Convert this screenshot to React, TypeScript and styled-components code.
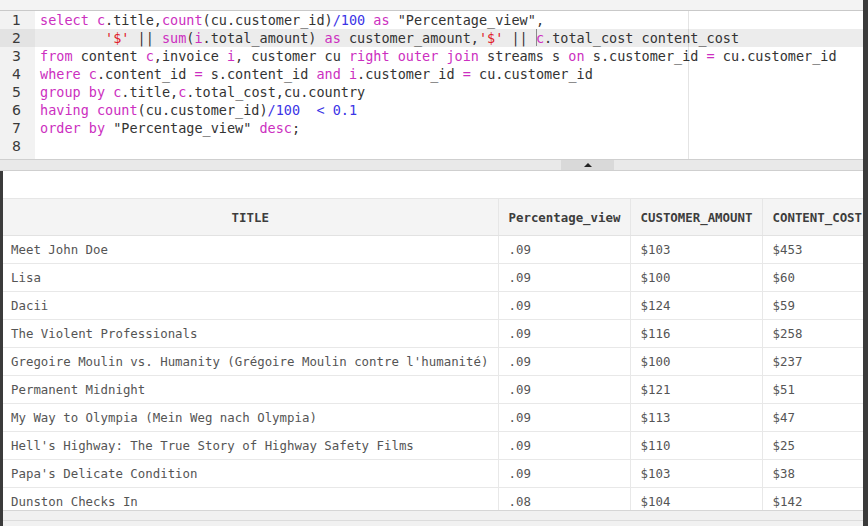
import React from "react";
import styled, { createGlobalStyle } from "styled-components";

const Global = createGlobalStyle`
  html, body { margin: 0; padding: 0; background: #ffffff; }
  body { font-family: "DejaVu Sans Mono", monospace; }
`;

const Frame = styled.div`
  width: 868px;
  height: 526px;
  box-sizing: border-box;
  border-right: 5px solid #3b3b3b;
  display: flex;
  flex-direction: column;
  overflow: hidden;
  background: #fff;
`;

const TopStrip = styled.div`
  height: 10px;
  flex: 0 0 auto;
  background: #f3f3f3;
  border-bottom: 1px solid #c9c9c9;
`;

const Editor = styled.div`
  height: 148px;
  flex: 0 0 auto;
  display: flex;
  font-family: "DejaVu Sans Mono", monospace;
  font-size: 13.5px;
  color: #333;
`;

const Gutter = styled.div`
  width: 35px;
  flex: 0 0 auto;
  background: #f2f2f2;
  display: flex;
  flex-direction: column;
`;

const LineNo = styled.div<{ $active?: boolean }>`
  height: 18px;
  line-height: 18px;
  text-align: right;
  padding-right: 14px;
  color: #3a3a3a;
  background: ${(p) => (p.$active ? "#e3e3e3" : "transparent")};
  font-family: "DejaVu Sans", sans-serif;
  font-size: 14px;
`;

const Code = styled.div`
  flex: 1;
  position: relative;
  display: flex;
  flex-direction: column;
`;

const Ruler = styled.div`
  position: absolute;
  left: 653px;
  top: 0;
  bottom: 0;
  width: 1px;
  background: #e4e4e4;
`;

const CodeLine = styled.div<{ $active?: boolean }>`
  position: relative;
  height: 18px;
  line-height: 18px;
  padding-left: 5px;
  white-space: pre;
  background: ${(p) => (p.$active ? "rgba(0,0,0,0.075)" : "transparent")};
`;

const Tok = styled.span<{ $k: string }>`
  color: ${(p) =>
    p.$k === "k" ? "#cc2fc0" : p.$k === "n" ? "#3b35e6" : p.$k === "s" ? "#e02028" : "#333"};
`;

const Cursor = styled.span`
  display: inline-block;
  width: 1px;
  height: 17px;
  margin-right: -1px;
  vertical-align: top;
  background: #8a8a8a;
`;

const Splitter = styled.div`
  height: 10px;
  flex: 0 0 auto;
  background: #e9e9e9;
  border-top: 1px solid #cfcfcf;
  border-bottom: 1px solid #cfcfcf;
  display: flex;
  padding-left: 561px;
`;

const SplitHandle = styled.div`
  width: 53px;
  background: #d9d9d9;
  display: flex;
  align-items: center;
  justify-content: center;
`;

const Tri = styled.div`
  width: 0;
  height: 0;
  border-left: 4px solid transparent;
  border-right: 4px solid transparent;
  border-bottom: 4px solid #222;
`;

const Results = styled.div`
  flex: 1;
  display: flex;
  flex-direction: column;
  border-left: 3px solid #3b3b3b;
  min-height: 0;
`;

const Spacer = styled.div`
  height: 27px;
  flex: 0 0 auto;
`;

const TableWrap = styled.div`
  height: 312px;
  flex: 0 0 auto;
  overflow: hidden;
`;

const Table = styled.table`
  border-collapse: collapse;
  table-layout: fixed;
  width: 873px;
  font-family: "DejaVu Sans Mono", monospace;
  font-size: 12.4px;
`;

const Th = styled.th<{ $center?: boolean }>`
  height: 36px;
  padding: 0 0 0 ${(p) => (p.$center ? "0" : "10px")};
  background: #f4f4f4;
  border-top: 1px solid #e6e6e6;
  border-bottom: 1px solid #e2e2e2;
  border-right: 1px solid #e6e6e6;
  text-align: ${(p) => (p.$center ? "center" : "left")};
  font-weight: bold;
  color: #3d3d3d;
  white-space: nowrap;
  overflow: hidden;
`;

const Td = styled.td<{ $first?: boolean }>`
  height: 27px;
  padding: 0 0 0 ${(p) => (p.$first ? "8px" : "10px")};
  border-bottom: 1px solid #e8e8e8;
  border-right: 1px solid #e8e8e8;
  color: #555;
  white-space: nowrap;
  overflow: hidden;
`;

const HScroll = styled.div`
  flex: 1;
  background: #f1f1f1;
  border-top: 1px solid #d6d6d6;
  display: flex;
  flex-direction: column;
`;

const HScrollTrack = styled.div`
  height: 9px;
  border-bottom: 1px solid #dcdcdc;
`;

type T = [string, string] | "cursor";

const lines: T[][] = [
  [["select", "k"], [" ", "t"], ["c", "k"], [".title,", "t"], ["count", "k"], ["(cu.customer_id)", "t"], ["/100", "n"], [" ", "t"], ["as", "k"], [' "Percentage_view",', "t"]],
  [["        ", "t"], ["'$'", "s"], [" || ", "t"], ["sum", "k"], ["(", "t"], ["i", "k"], [".total_amount) ", "t"], ["as", "k"], [" customer_amount,", "t"], ["'$'", "s"], [" || ", "t"], "cursor", ["c", "k"], [".total_cost content_cost", "t"]],
  [["from", "k"], [" content ", "t"], ["c", "k"], [",invoice ", "t"], ["i", "k"], [", customer cu ", "t"], ["right outer join", "k"], [" streams s ", "t"], ["on", "k"], [" s.customer_id ", "t"], ["=", "k"], [" cu.customer_id", "t"]],
  [["where", "k"], [" ", "t"], ["c", "k"], [".content_id ", "t"], ["=", "k"], [" s.content_id ", "t"], ["and", "k"], [" ", "t"], ["i", "k"], [".customer_id ", "t"], ["=", "k"], [" cu.customer_id", "t"]],
  [["group by", "k"], [" ", "t"], ["c", "k"], [".title,", "t"], ["c", "k"], [".total_cost,cu.country", "t"]],
  [["having", "k"], [" ", "t"], ["count", "k"], ["(cu.customer_id)", "t"], ["/100", "n"], ["  ", "t"], ["<", "n"], [" ", "t"], ["0.1", "n"]],
  [["order by", "k"], [' "Percentage_view" ', "t"], ["desc", "k"], [";", "t"]],
  [],
];

const rows: [string, string, string, string][] = [
  ["Meet John Doe", ".09", "$103", "$453"],
  ["Lisa", ".09", "$100", "$60"],
  ["Dacii", ".09", "$124", "$59"],
  ["The Violent Professionals", ".09", "$116", "$258"],
  ["Gregoire Moulin vs. Humanity (Grégoire Moulin contre l'humanité)", ".09", "$100", "$237"],
  ["Permanent Midnight", ".09", "$121", "$51"],
  ["My Way to Olympia (Mein Weg nach Olympia)", ".09", "$113", "$47"],
  ["Hell's Highway: The True Story of Highway Safety Films", ".09", "$110", "$25"],
  ["Papa's Delicate Condition", ".09", "$103", "$38"],
  ["Dunston Checks In", ".08", "$104", "$142"],
];

export default function App() {
  return (
    <Frame>
      <Global />
      <TopStrip />
      <Editor>
        <Gutter>
          {lines.map((_, i) => (
            <LineNo key={i} $active={i === 1}>{i + 1}</LineNo>
          ))}
        </Gutter>
        <Code>
          <Ruler />
          {lines.map((l, i) => (
            <CodeLine key={i} $active={i === 1}>
              {l.map((t, j) =>
                t === "cursor" ? (
                  <Cursor key={j} />
                ) : (
                  <Tok key={j} $k={t[1]}>{t[0]}</Tok>
                )
              )}
              {l.length === 0 ? " " : null}
            </CodeLine>
          ))}
        </Code>
      </Editor>
      <Splitter>
        <SplitHandle>
          <Tri />
        </SplitHandle>
      </Splitter>
      <Results>
        <Spacer />
        <TableWrap>
          <Table>
            <colgroup>
              <col style={{ width: 495 }} />
              <col style={{ width: 132 }} />
              <col style={{ width: 132 }} />
              <col style={{ width: 114 }} />
            </colgroup>
            <thead>
              <tr>
                <Th $center>TITLE</Th>
                <Th>Percentage_view</Th>
                <Th>CUSTOMER_AMOUNT</Th>
                <Th>CONTENT_COST</Th>
              </tr>
            </thead>
            <tbody>
              {rows.map((r, i) => (
                <tr key={i}>
                  <Td $first>{r[0]}</Td>
                  <Td>{r[1]}</Td>
                  <Td>{r[2]}</Td>
                  <Td>{r[3]}</Td>
                </tr>
              ))}
            </tbody>
          </Table>
        </TableWrap>
        <HScroll>
          <HScrollTrack />
        </HScroll>
      </Results>
    </Frame>
  );
}
